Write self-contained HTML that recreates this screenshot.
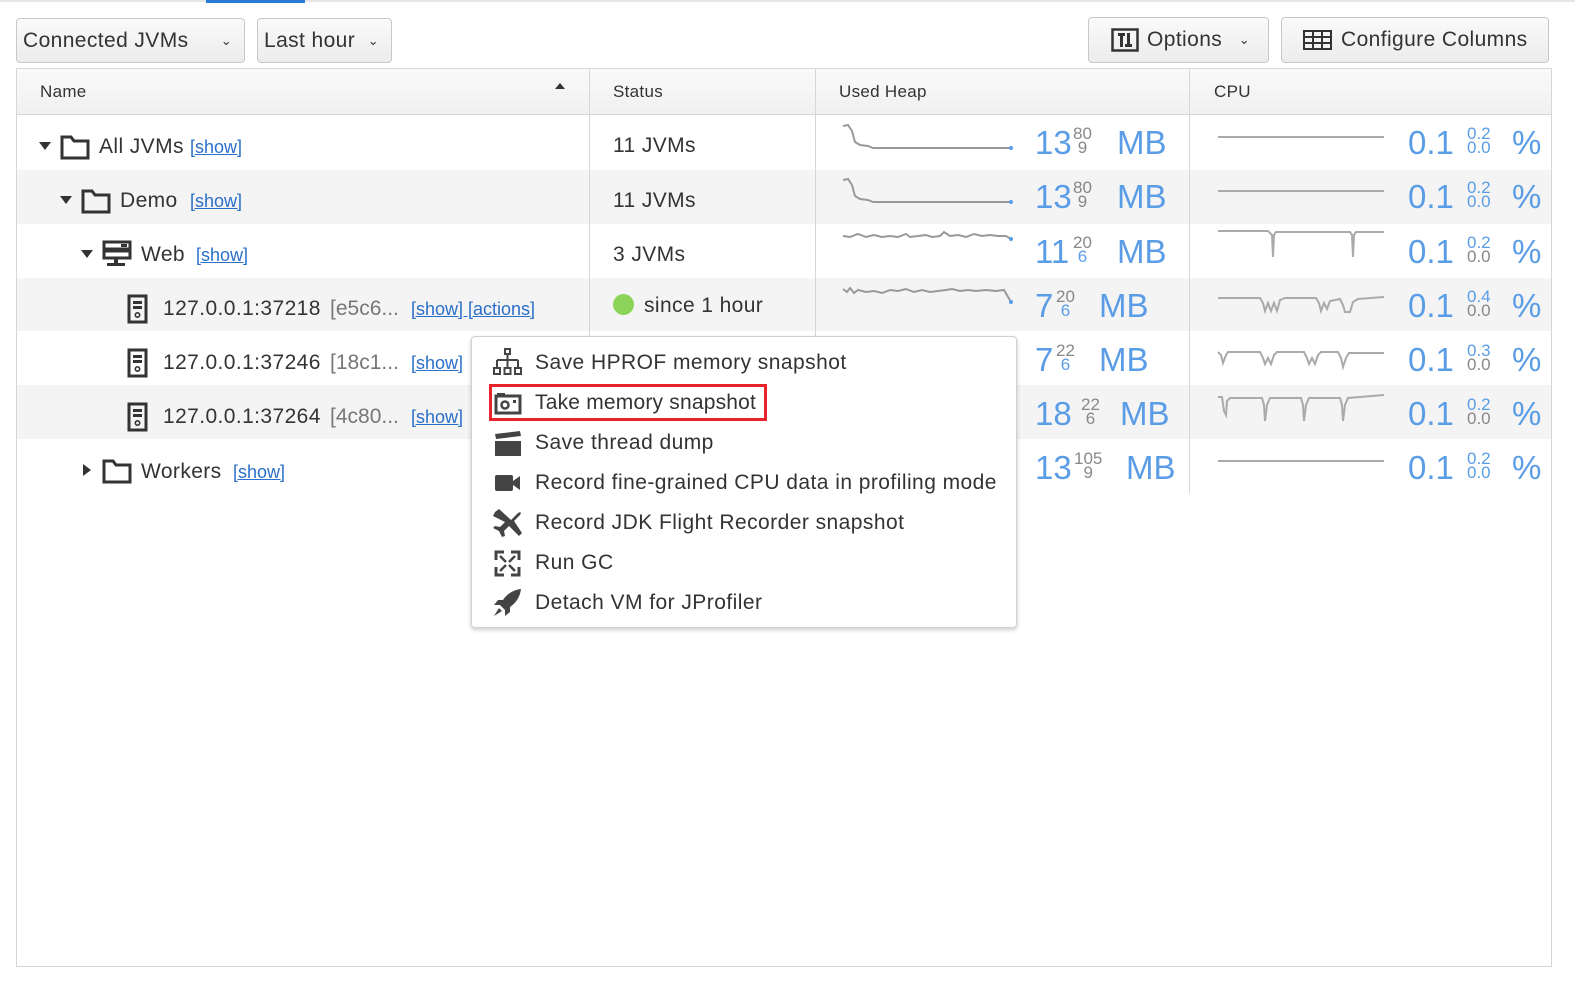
<!DOCTYPE html>
<html><head><meta charset="utf-8"><style>
*{margin:0;padding:0;box-sizing:border-box}
body{width:1575px;height:985px;background:#fff;font-family:"Liberation Sans",sans-serif;color:#333;position:relative;overflow:hidden}
.a{position:absolute}
.btn{position:absolute;border:1px solid #c8c8c8;border-radius:4px;background:linear-gradient(#fafafa,#ececec);font-size:21px;color:#333;display:flex;align-items:center;letter-spacing:0.4px}
.t{position:absolute;font-size:21px;color:#333;white-space:nowrap;letter-spacing:0.4px}
.lk2{position:absolute;color:#2a6fc9;text-decoration:underline;font-size:18px;white-space:nowrap}
.gr{color:#777}
.hd{position:absolute;font-size:17px;color:#333;letter-spacing:0.3px}
.big{position:absolute;color:#5a9de6;font-size:33px;white-space:nowrap}
.sm{position:absolute;font-size:17px;line-height:14px;color:#888;text-align:center}
.mi{position:absolute;left:535px;font-size:21px;color:#333;white-space:nowrap;letter-spacing:0.45px}
</style></head><body>
<div class="a" style="left:0;top:0;width:1575px;height:2px;background:#e6e6e6"></div>
<div class="a" style="left:206px;top:0;width:99px;height:3px;background:#2a7bd6"></div>

<div class="btn" style="left:16px;top:18px;width:229px;height:45px;padding-left:6px">Connected JVMs<span style="position:absolute;right:12px;font-size:13px">&#8964;</span></div>
<div class="btn" style="left:257px;top:18px;width:135px;height:45px;padding-left:6px">Last hour<span style="position:absolute;right:12px;font-size:13px">&#8964;</span></div>
<div class="btn" style="left:1088px;top:17px;width:181px;height:46px;padding-left:22px">
<svg width="28" height="24" viewBox="0 0 28 24" style="margin-right:8px"><rect x="1.5" y="1.5" width="25" height="21" fill="none" stroke="#333" stroke-width="2.5"/><rect x="9" y="5" width="3" height="14" fill="#333"/><rect x="16" y="5" width="3" height="14" fill="#333"/><rect x="7" y="5" width="7" height="3" fill="#333"/><rect x="14" y="16" width="7" height="3" fill="#333"/></svg>Options<span style="position:absolute;right:18px;font-size:13px">&#8964;</span></div>
<div class="btn" style="left:1281px;top:17px;width:268px;height:46px;padding-left:21px">
<svg width="29" height="20" viewBox="0 0 29 20" style="margin-right:9px"><rect x="1" y="1" width="27" height="18" fill="none" stroke="#333" stroke-width="2"/><path d="M1 7H28M1 13H28M10 1V19M19 1V19" stroke="#333" stroke-width="2"/></svg>Configure Columns</div>

<div class="a" style="left:16px;top:68px;width:1536px;height:899px;border:1px solid #d6d6d6"></div>
<div class="a" style="left:17px;top:69px;width:1534px;height:46px;background:linear-gradient(#fafafa,#f0f0f0);border-bottom:1px solid #d6d6d6"></div>
<div class="hd" style="left:40px;top:82px">Name</div>
<div class="a" style="left:555px;top:83px;width:0;height:0;border-left:5px solid transparent;border-right:5px solid transparent;border-bottom:6px solid #333"></div>
<div class="hd" style="left:613px;top:82px">Status</div>
<div class="hd" style="left:839px;top:82px">Used Heap</div>
<div class="hd" style="left:1214px;top:82px">CPU</div>

<div class="a" style="left:17px;top:170px;width:1534px;height:54px;background:#f4f4f4"></div>
<div class="a" style="left:17px;top:278px;width:1534px;height:53px;background:#f4f4f4"></div>
<div class="a" style="left:17px;top:385px;width:1534px;height:54px;background:#f4f4f4"></div>

<div class="a" style="left:589px;top:69px;width:1px;height:424px;background:#d6d6d6"></div>
<div class="a" style="left:815px;top:69px;width:1px;height:424px;background:#d6d6d6"></div>
<div class="a" style="left:1189px;top:69px;width:1px;height:424px;background:#d6d6d6"></div>

<svg class="a" style="left:38px;top:141px" width="14" height="10"><path d="M1 1H13L7 9Z" fill="#333"/></svg>
<svg class="a" style="left:60px;top:134px" width="30" height="26"><path d="M2 3H11L14 7H28V24H2Z" fill="none" stroke="#333" stroke-width="3"/></svg>
<div class="t" style="left:99px;top:135px">All JVMs</div><div class="lk2" style="left:190px;top:137px">[show]</div>

<svg class="a" style="left:59px;top:195px" width="14" height="10"><path d="M1 1H13L7 9Z" fill="#333"/></svg>
<svg class="a" style="left:81px;top:188px" width="30" height="26"><path d="M2 3H11L14 7H28V24H2Z" fill="none" stroke="#333" stroke-width="3"/></svg>
<div class="t" style="left:120px;top:189px">Demo</div><div class="lk2" style="left:190px;top:191px">[show]</div>

<svg class="a" style="left:80px;top:249px" width="14" height="10"><path d="M1 1H13L7 9Z" fill="#333"/></svg>
<svg class="a" style="left:102px;top:240px" width="30" height="28"><rect x="2" y="2" width="26" height="7" fill="none" stroke="#333" stroke-width="3"/><rect x="2" y="11" width="26" height="7" fill="none" stroke="#333" stroke-width="3"/><rect x="12" y="18" width="4" height="5" fill="#333"/><rect x="5" y="23" width="18" height="3" fill="#333"/><rect x="19" y="4" width="6" height="3" fill="#333"/></svg>
<div class="t" style="left:141px;top:243px">Web</div><div class="lk2" style="left:196px;top:245px">[show]</div>

<svg class="a" style="left:127px;top:294px" width="22" height="30"><rect x="2" y="2" width="17" height="26" fill="none" stroke="#333" stroke-width="3"/><rect x="6" y="7" width="9" height="3" fill="#333"/><rect x="6" y="12" width="9" height="3" fill="#333"/><circle cx="10.5" cy="21" r="2.2" fill="none" stroke="#333" stroke-width="1.6"/></svg>
<div class="t" style="left:163px;top:297px">127.0.0.1:37218</div><div class="t gr" style="left:330px;top:297px;letter-spacing:0">[e5c6...</div><div class="lk2" style="left:411px;top:299px">[show] [actions]</div>

<svg class="a" style="left:127px;top:348px" width="22" height="30"><rect x="2" y="2" width="17" height="26" fill="none" stroke="#333" stroke-width="3"/><rect x="6" y="7" width="9" height="3" fill="#333"/><rect x="6" y="12" width="9" height="3" fill="#333"/><circle cx="10.5" cy="21" r="2.2" fill="none" stroke="#333" stroke-width="1.6"/></svg>
<div class="t" style="left:163px;top:351px">127.0.0.1:37246</div><div class="t gr" style="left:330px;top:351px;letter-spacing:0">[18c1...</div><div class="lk2" style="left:411px;top:353px">[show]</div>

<svg class="a" style="left:127px;top:402px" width="22" height="30"><rect x="2" y="2" width="17" height="26" fill="none" stroke="#333" stroke-width="3"/><rect x="6" y="7" width="9" height="3" fill="#333"/><rect x="6" y="12" width="9" height="3" fill="#333"/><circle cx="10.5" cy="21" r="2.2" fill="none" stroke="#333" stroke-width="1.6"/></svg>
<div class="t" style="left:163px;top:405px">127.0.0.1:37264</div><div class="t gr" style="left:330px;top:405px;letter-spacing:0">[4c80...</div><div class="lk2" style="left:411px;top:407px">[show]</div>

<svg class="a" style="left:82px;top:463px" width="10" height="14"><path d="M1 1V13L9 7Z" fill="#333"/></svg>
<svg class="a" style="left:102px;top:458px" width="30" height="26"><path d="M2 3H11L14 7H28V24H2Z" fill="none" stroke="#333" stroke-width="3"/></svg>
<div class="t" style="left:141px;top:460px">Workers</div><div class="lk2" style="left:233px;top:462px">[show]</div>

<div class="t" style="left:613px;top:134px">11 JVMs</div>
<div class="t" style="left:613px;top:189px">11 JVMs</div>
<div class="t" style="left:613px;top:243px">3 JVMs</div>
<div class="a" style="left:613px;top:294px;width:21px;height:21px;border-radius:50%;background:#8cd35a"></div>
<div class="t" style="left:644px;top:294px">since 1 hour</div>

<svg class="a" style="left:840px;top:115px" width="175" height="380" fill="none" stroke="#999" stroke-width="2">
<path d="M3 11L8 10L12 16L15 27L20 30L28 31L33 33L171 33"/>
<path d="M3 65L8 64L12 70L15 81L20 84L28 85L33 87L171 87"/>
<path d="M3 121L10 122L18 119L26 122L34 120L42 122L50 121L58 122L66 119L70 122L78 121L86 120L92 122L100 121L104 117L110 121L118 120L126 122L134 119L142 121L150 120L158 121L166 121L171 124"/>
<path d="M3 174L7 177L10 173L14 178L18 175L26 177L34 176L42 178L50 175L58 176L66 174L74 177L82 175L90 177L98 176L106 175L112 174L120 176L128 175L136 176L146 175L156 176L164 175L171 187"/>
</svg>
<svg class="a" style="left:840px;top:115px" width="175" height="380"><circle cx="171" cy="33" r="2" fill="#5a9de6"/><circle cx="171" cy="87" r="2" fill="#5a9de6"/><circle cx="171" cy="124" r="2" fill="#5a9de6"/><circle cx="171" cy="187" r="2" fill="#5a9de6"/></svg>

<div class="big" style="left:1035px;top:124px">13</div><div class="sm" style="left:1073px;top:127px">80<br>9</div><div class="big" style="left:1117px;top:124px">MB</div>
<div class="big" style="left:1035px;top:178px">13</div><div class="sm" style="left:1073px;top:181px">80<br>9</div><div class="big" style="left:1117px;top:178px">MB</div>
<div class="big" style="left:1035px;top:233px">11</div><div class="sm" style="left:1073px;top:236px">20<br><span style="color:#5a9de6">6</span></div><div class="big" style="left:1117px;top:233px">MB</div>
<div class="big" style="left:1035px;top:287px">7</div><div class="sm" style="left:1056px;top:290px">20<br><span style="color:#5a9de6">6</span></div><div class="big" style="left:1099px;top:287px">MB</div>
<div class="big" style="left:1035px;top:341px">7</div><div class="sm" style="left:1056px;top:344px">22<br><span style="color:#5a9de6">6</span></div><div class="big" style="left:1099px;top:341px">MB</div>
<div class="big" style="left:1035px;top:395px">18</div><div class="sm" style="left:1081px;top:398px">22<br>6</div><div class="big" style="left:1120px;top:395px">MB</div>
<div class="big" style="left:1035px;top:449px">13</div><div class="sm" style="left:1074px;top:452px">105<br>9</div><div class="big" style="left:1126px;top:449px">MB</div>

<svg class="a" style="left:1210px;top:115px" width="180" height="380" fill="none" stroke="#aaa" stroke-width="2">
<path d="M8 22H174"/>
<path d="M8 76H174"/>
<path d="M8 116H58L62 120L63 142L64 120L66 117H140L142 120L143 142L144 120L146 117H174"/>
<path d="M8 183H50L53 188L55 196L58 188L61 196L64 188L67 196L70 185L75 183H106L109 188L111 196L114 188L117 194L120 186L130 184L133 190L135 197L140 197L143 187L148 184L174 182"/>
<path d="M8 237L11 240L13 248L16 240L18 237H50L53 243L55 249L58 243L61 249L64 240L67 237H94L97 243L99 249L102 243L105 249L108 240L111 237H128L131 243L133 252L136 243L139 238H174"/>
<path d="M8 282H12L14 296L16 300L17 286L20 283H52L54 290L55 306L57 290L60 283H91L93 290L94 306L96 290L99 283H130L132 290L133 306L135 290L138 283L174 280"/>
<path d="M8 346H174"/>
</svg>

<div class="big" style="left:1408px;top:124px">0.1</div><div class="sm" style="left:1467px;top:127px;color:#5a9de6">0.2<br>0.0</div><div class="big" style="left:1512px;top:124px">%</div>
<div class="big" style="left:1408px;top:178px">0.1</div><div class="sm" style="left:1467px;top:181px;color:#5a9de6">0.2<br>0.0</div><div class="big" style="left:1512px;top:178px">%</div>
<div class="big" style="left:1408px;top:233px">0.1</div><div class="sm" style="left:1467px;top:236px;color:#5a9de6">0.2<br><span style="color:#888">0.0</span></div><div class="big" style="left:1512px;top:233px">%</div>
<div class="big" style="left:1408px;top:287px">0.1</div><div class="sm" style="left:1467px;top:290px;color:#5a9de6">0.4<br><span style="color:#888">0.0</span></div><div class="big" style="left:1512px;top:287px">%</div>
<div class="big" style="left:1408px;top:341px">0.1</div><div class="sm" style="left:1467px;top:344px;color:#5a9de6">0.3<br><span style="color:#888">0.0</span></div><div class="big" style="left:1512px;top:341px">%</div>
<div class="big" style="left:1408px;top:395px">0.1</div><div class="sm" style="left:1467px;top:398px;color:#5a9de6">0.2<br><span style="color:#888">0.0</span></div><div class="big" style="left:1512px;top:395px">%</div>
<div class="big" style="left:1408px;top:449px">0.1</div><div class="sm" style="left:1467px;top:452px;color:#5a9de6">0.2<br>0.0</div><div class="big" style="left:1512px;top:449px">%</div>

<div class="a" style="left:471px;top:336px;width:546px;height:292px;background:#fff;border:1px solid #d0d0d0;border-radius:4px;box-shadow:0 2px 4px rgba(0,0,0,.2)"></div>
<svg class="a" style="left:493px;top:348px" width="30" height="28" fill="#444"><rect x="12" y="1" width="5" height="5" fill="none" stroke="#444" stroke-width="2"/><path d="M14.5 6V12M4 12H25M4 12V19M14.5 12V19M25 12V19" stroke="#444" stroke-width="2" fill="none"/><rect x="1" y="20" width="6" height="6" fill="none" stroke="#444" stroke-width="2"/><rect x="11.5" y="20" width="6" height="6" fill="none" stroke="#444" stroke-width="2"/><rect x="22" y="20" width="6" height="6" fill="none" stroke="#444" stroke-width="2"/></svg>
<div class="mi" style="top:351px">Save HPROF memory snapshot</div>
<div class="a" style="left:489px;top:384px;width:278px;height:37px;border:3px solid #e8232a"></div>
<svg class="a" style="left:494px;top:391px" width="28" height="24"><rect x="2" y="5" width="24" height="17" fill="none" stroke="#444" stroke-width="3"/><rect x="3" y="2" width="8" height="4" fill="#444"/><circle cx="11" cy="14" r="3.5" fill="none" stroke="#444" stroke-width="2.5"/><rect x="19" y="9" width="3" height="3" fill="#444"/></svg>
<div class="mi" style="top:391px;letter-spacing:0.2px">Take memory snapshot</div>
<svg class="a" style="left:494px;top:430px" width="28" height="26" fill="#444"><path d="M1 4L26 1L27 6L2 9Z"/><rect x="1" y="11" width="26" height="4"/><rect x="1" y="15" width="26" height="11"/></svg>
<div class="mi" style="top:431px">Save thread dump</div>
<svg class="a" style="left:495px;top:474px" width="26" height="18" fill="#444"><rect x="0" y="1" width="18" height="16" rx="2"/><path d="M18 7L25 2V16L18 11Z"/></svg>
<div class="mi" style="top:471px">Record fine-grained CPU data in profiling mode</div>
<svg class="a" style="left:493px;top:508px" width="30" height="30" fill="#444"><path d="M2 4L6 1L18 12L24 6C27 3 29 4 27 7L21 13L29 25L26 28L16 18L11 23L12 28L9 29L6 23L0 20L2 18L7 19L12 14L0 8Z"/></svg>
<div class="mi" style="top:511px">Record JDK Flight Recorder snapshot</div>
<svg class="a" style="left:494px;top:550px" width="27" height="27" fill="none" stroke="#444" stroke-width="3"><path d="M2 10V2H10M17 2H25V10M25 17V25H17M10 25H2V17"/><path d="M6 6L12 12M21 6L15 12M21 21L15 15M6 21L12 15" stroke-width="2.5"/></svg>
<div class="mi" style="top:551px">Run GC</div>
<svg class="a" style="left:493px;top:588px" width="29" height="29" fill="#444"><path d="M28 1C20 2 14 6 10 12L5 12L1 17L7 17L12 22L12 28L17 24L17 19C23 15 27 9 28 1Z"/><path d="M6 20L1 28L9 23Z"/></svg>
<div class="mi" style="top:591px">Detach VM for JProfiler</div>
</body></html>
